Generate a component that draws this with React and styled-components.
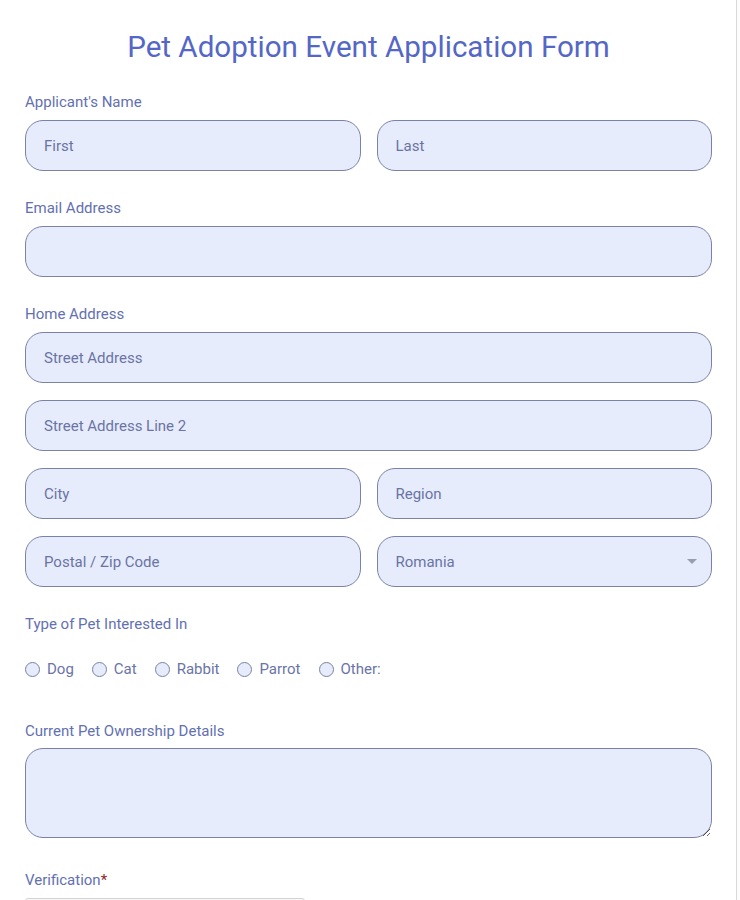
import React from "react";
import styled, { createGlobalStyle } from "styled-components";

const Global = createGlobalStyle`
  html, body { margin: 0; padding: 0; background: #fcfcfc; }
  body { font-family: Roboto, "Liberation Sans", sans-serif; }
  * { box-sizing: border-box; }
`;

const Page = styled.div`
  width: 737px;
  min-height: 900px;
  background: #ffffff;
  border-right: 1px solid #d9d9d9;
  padding: 25px 24px 0 25px;
`;

const Title = styled.h1`
  margin: 0 0 24px;
  text-align: center;
  font-weight: 400;
  font-size: 29.6px;
  line-height: 44px;
  color: #5567c6;
`;

const Field = styled.div`
  display: flex;
  flex-direction: column;
  gap: ${(p) => p.$gap ?? 17}px;
  margin-bottom: ${(p) => p.$mb ?? 28}px;
`;

const Label = styled.label`
  display: block;
  font-size: 15px;
  line-height: 18px;
  color: #6370b2;
  margin-bottom: ${(p) => p.$mb ?? -8}px;
`;

const Star = styled.span`
  color: #8b2b2b;
`;

const Row = styled.div`
  display: grid;
  grid-template-columns: 1fr 1fr;
  gap: 16px;
`;

const Input = styled.input`
  width: 100%;
  height: 51px;
  border: 1px solid #7a82a6;
  border-radius: 18px;
  background: #e7ecfc;
  padding: 0 18px;
  font-family: inherit;
  font-size: 15px;
  color: #4b5690;
  outline: none;
  &::placeholder { color: #6a74a4; }
`;

const SelectWrap = styled.div`
  position: relative;
  height: 51px;
  border: 1px solid #7a82a6;
  border-radius: 18px;
  background: #e7ecfc;
  padding: 0 18px;
  display: flex;
  align-items: center;
  font-size: 15px;
  color: #6a74a4;
`;

const Caret = styled.span`
  position: absolute;
  right: 14px;
  top: 22px;
  width: 0;
  height: 0;
  border-left: 5px solid transparent;
  border-right: 5px solid transparent;
  border-top: 5px solid #9a9eaa;
`;

const Radios = styled.div`
  display: flex;
  align-items: center;
  gap: 18px;
  margin-top: 25px;
  height: 24px;
`;

const RadioItem = styled.label`
  display: flex;
  align-items: center;
  gap: 7px;
  font-size: 15px;
  color: #6a74a8;
`;

const Circle = styled.span`
  width: 15px;
  height: 15px;
  border-radius: 50%;
  border: 1px solid #7a82a6;
  background: #e7ecfc;
`;

const TextArea = styled.textarea`
  width: 100%;
  height: 90px;
  border: 1px solid #7a82a6;
  border-radius: 18px;
  background: #e7ecfc;
  resize: vertical;
  font-family: inherit;
  font-size: 15px;
  outline: none;
  padding: 12px 18px;
`;

const CaptchaBox = styled.div`
  width: 280px;
  height: 40px;
  border: 1px solid #d3d3d3;
  border-radius: 3px;
  background: #f9f9f9;
`;

export default function App() {
  const pets = ["Dog", "Cat", "Rabbit", "Parrot", "Other:"];
  return (
    <>
      <Global />
      <Page>
        <Title>Pet Adoption Event Application Form</Title>

        <Field $gap={18}>
          <Label $mb={-9}>Applicant's Name</Label>
          <Row>
            <Input placeholder="First" />
            <Input placeholder="Last" />
          </Row>
        </Field>

        <Field $gap={18}>
          <Label $mb={-9}>Email Address</Label>
          <Input />
        </Field>

        <Field>
          <Label $mb={-8}>Home Address</Label>
          <Input placeholder="Street Address" />
          <Input placeholder="Street Address Line 2" />
          <Row>
            <Input placeholder="City" />
            <Input placeholder="Region" />
          </Row>
          <Row>
            <Input placeholder="Postal / Zip Code" />
            <SelectWrap>
              Romania
              <Caret />
            </SelectWrap>
          </Row>
        </Field>

        <Field $mb={41}>
          <Label $mb={-18}>Type of Pet Interested In</Label>
          <Radios>
            {pets.map((p) => (
              <RadioItem key={p}>
                <Circle />
                {p}
              </RadioItem>
            ))}
          </Radios>
        </Field>

        <Field $mb={33}>
          <Label $mb={-9}>Current Pet Ownership Details</Label>
          <TextArea />
        </Field>

        <Field $mb={0}>
          <Label>
            Verification<Star>*</Star>
          </Label>
          <CaptchaBox />
        </Field>
      </Page>
    </>
  );
}
